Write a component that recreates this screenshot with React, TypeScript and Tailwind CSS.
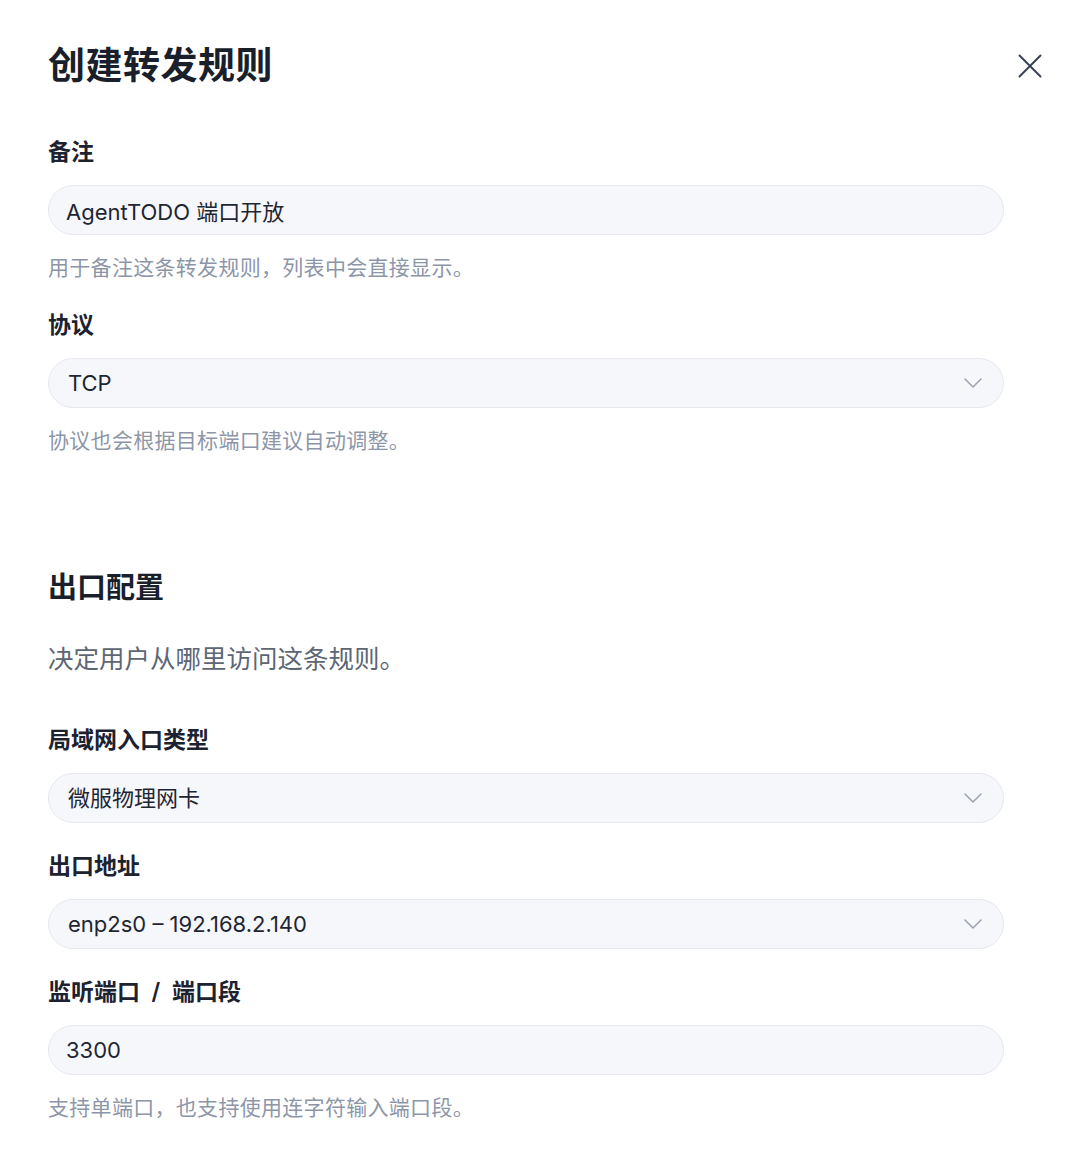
import React, { useState } from 'react';

const FONT = "font-['Inter','Noto_Sans_CJK_SC',sans-serif]";

const Chevron = () => (
  <svg width="18" height="10" viewBox="0 0 18 10" fill="none" className="shrink-0">
    <path d="M1 1l8 8 8-8" stroke="#9aa1ad" strokeWidth="1.5" strokeLinecap="round" strokeLinejoin="round" />
  </svg>
);

interface FieldProps {
  label: string;
  help?: string;
  children: React.ReactNode;
}

const Field: React.FC<FieldProps> = ({ label, help, children }) => (
  <div className="flex flex-col">
    <label className="text-[23px] leading-[30px] font-semibold text-[#1c2230] mb-[18px] whitespace-pre">{label}</label>
    {children}
    {help && <p className="mt-[19px] text-[21px] leading-[28px] text-[#8d96a8] tracking-[0.3px]">{help}</p>}
  </div>
);

const TextBox: React.FC<{ value: string; onChange: (v: string) => void }> = ({ value, onChange }) => (
  <input
    value={value}
    onChange={(e) => onChange(e.target.value)}
    className="h-[50px] w-full rounded-full bg-[#f6f7fb] border border-[#e6e8ee] pl-[17px] pr-5 text-[22px] text-[#1f2633] outline-none"
  />
);

const SelectBox: React.FC<{ value: string }> = ({ value }) => (
  <button className="h-[50px] w-full rounded-full bg-[#f6f7fb] border border-[#e6e8ee] pl-[19px] pr-[21px] flex items-center justify-between text-[22px] text-[#1f2633] whitespace-pre">
    <span>{value}</span>
    <Chevron />
  </button>
);

export default function App() {
  const [note, setNote] = useState('AgentTODO 端口开放');
  const [port, setPort] = useState('3300');

  return (
    <div className={`${FONT} min-h-[1170px] bg-white pl-12 pr-[38px] pt-[42px]`}>
      {/* Header */}
      <div className="flex items-center justify-between">
        <h1 className="text-[37px] leading-[48px] font-bold text-[#1a1f2c] tracking-[0.5px]">创建转发规则</h1>
        <button className="w-10 h-10 flex items-center justify-center text-[#3a4252]">
          <svg width="24" height="24" viewBox="0 0 24 24" fill="none">
            <path d="M1.5 1.5l21 21M22.5 1.5l-21 21" stroke="currentColor" strokeWidth="2" strokeLinecap="round" />
          </svg>
        </button>
      </div>

      <div className="pr-[46px]">
        <div className="mt-[47px] flex flex-col gap-7">
          <Field label="备注" help="用于备注这条转发规则，列表中会直接显示。">
            <TextBox value={note} onChange={setNote} />
          </Field>
          <Field label="协议" help="协议也会根据目标端口建议自动调整。">
            <SelectBox value="TCP" />
          </Field>
        </div>

        {/* 出口配置 */}
        <div className="mt-[113px]">
          <h2 className="text-[29px] leading-[40px] font-bold text-[#1a1f2c]">出口配置</h2>
          <p className="mt-[33px] text-[25.5px] leading-[36px] text-[#5d6675]">决定用户从哪里访问这条规则。</p>
        </div>

        <div className="mt-[48px] flex flex-col gap-7 pb-10">
          <Field label="局域网入口类型">
            <SelectBox value="微服物理网卡" />
          </Field>
          <Field label="出口地址">
            <SelectBox value="enp2s0 – 192.168.2.140" />
          </Field>
          <Field label="监听端口  /  端口段" help="支持单端口，也支持使用连字符输入端口段。">
            <TextBox value={port} onChange={setPort} />
          </Field>
        </div>
      </div>
    </div>
  );
}
